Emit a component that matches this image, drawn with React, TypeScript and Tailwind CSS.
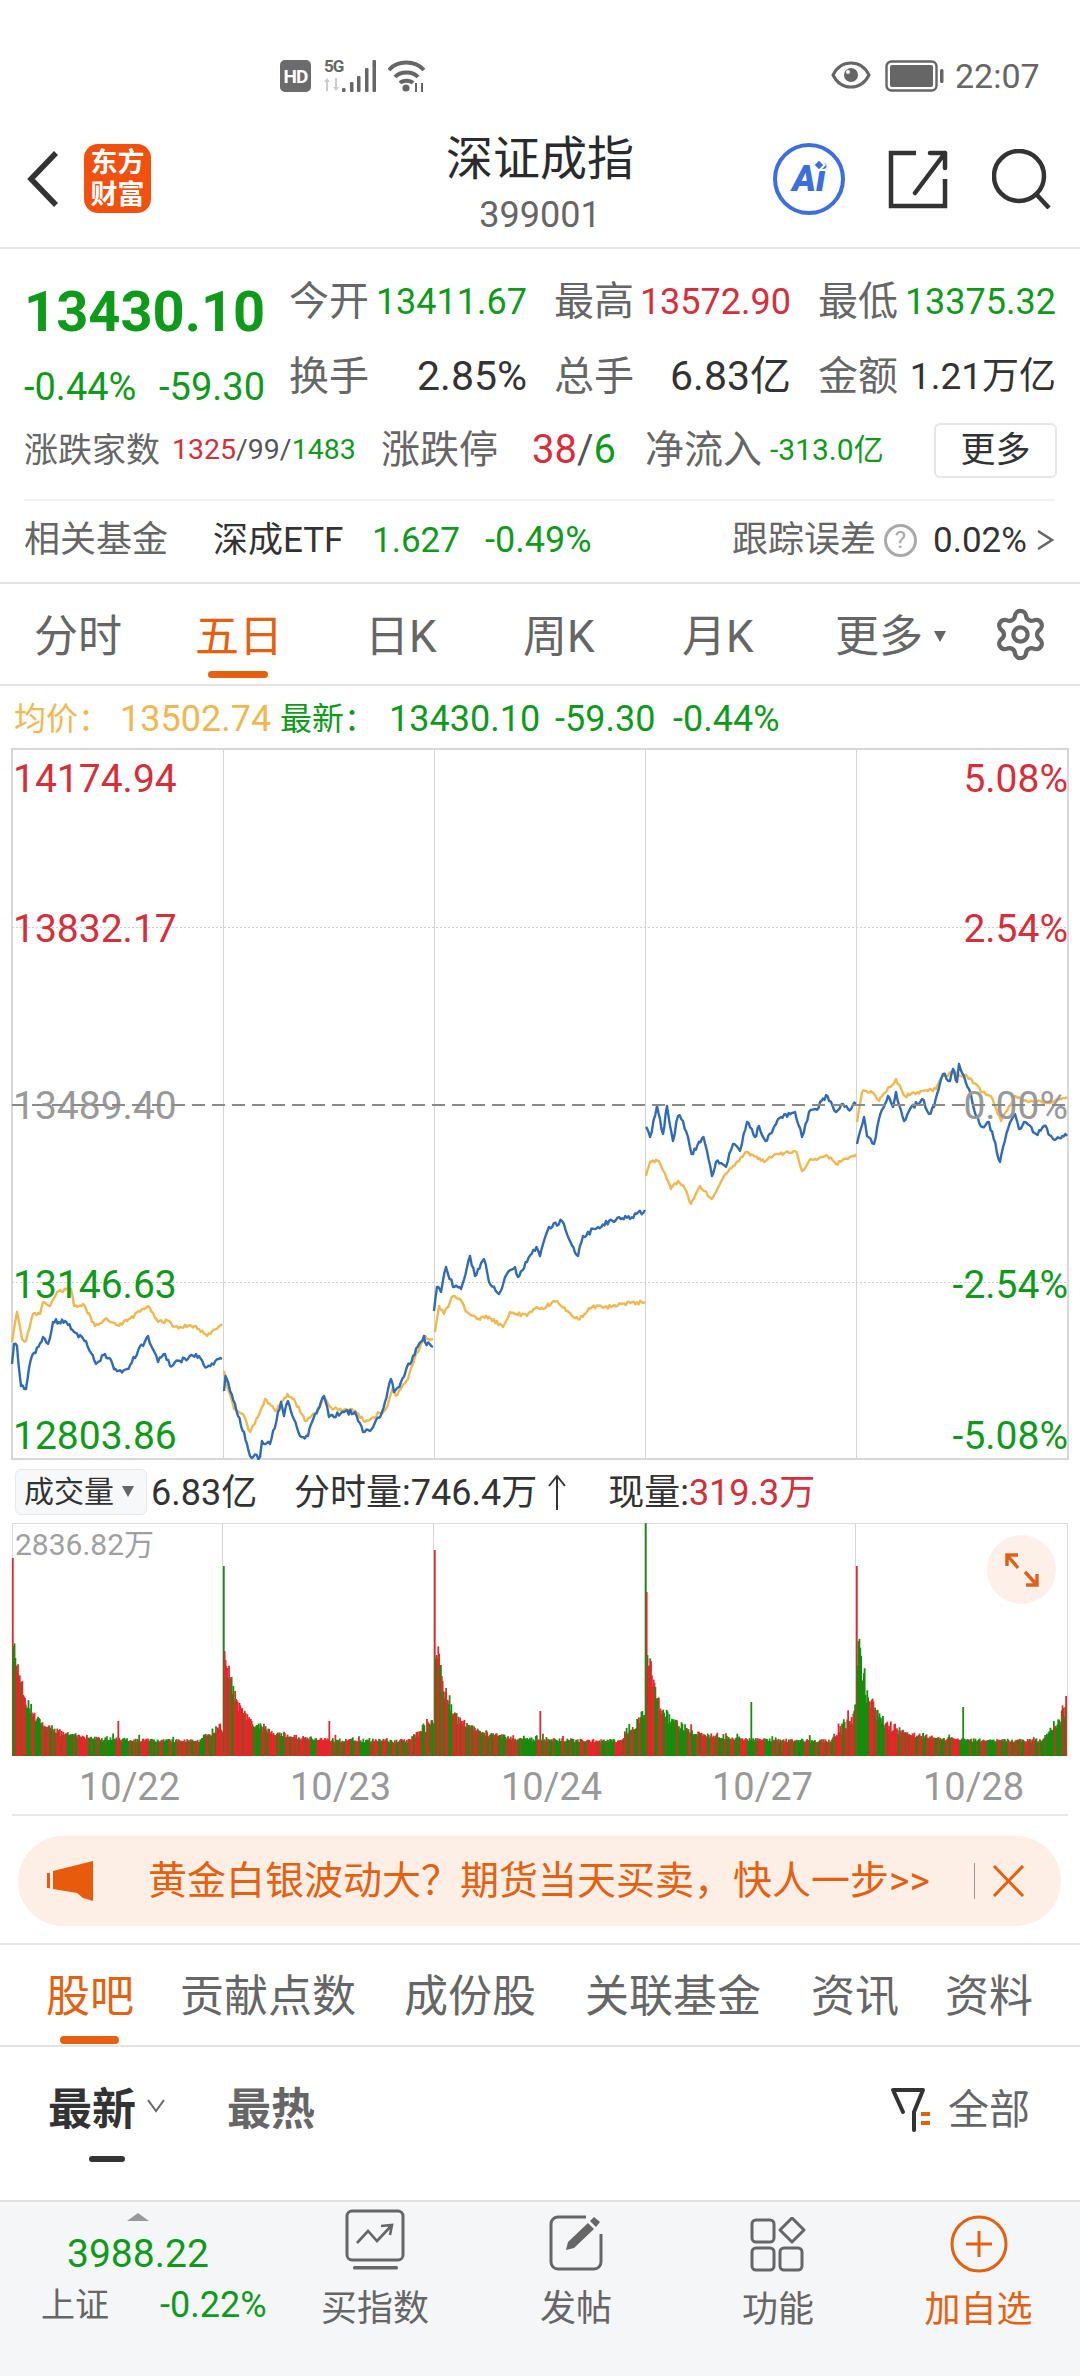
import React from "react";
import { Settings } from "lucide-react";

const GREEN = "text-[#0f9b1a]";
const RED = "text-[#d62f3a]";

// small seeded random so the chart noise stays the same on every load
function makeRand(seed: number) {
  let s = seed;
  return () => {
    s = (s * 1664525 + 1013904223) % 4294967296;
    return s / 4294967296;
  };
}

type Pt = [number, number];

function noisy(anchors: Pt[], seed: number, amp: number) {
  const rand = makeRand(seed);
  const out: string[] = [];
  anchors.forEach((p, i) => {
    if (i === 0) {
      out.push(`${p[0]},${p[1]}`);
      return;
    }
    const prev = anchors[i - 1];
    const steps = Math.max(1, Math.round((p[0] - prev[0]) / 1.6));
    for (let k = 1; k <= steps; k++) {
      const t = k / steps;
      const n = k === steps ? 0 : (rand() - 0.5) * amp * 2;
      out.push(`${(prev[0] + (p[0] - prev[0]) * t).toFixed(1)},${(prev[1] + (p[1] - prev[1]) * t + n).toFixed(1)}`);
    }
  });
  return out.join(" ");
}

const blue: Pt[][] = [
  [[12,1365],[14,1345],[17,1347],[21,1387],[26,1390],[31,1360],[43,1338],[48,1345],[53,1323],[65,1322],[74,1333],[86,1342],[96,1365],[105,1355],[117,1372],[127,1370],[148,1337],[158,1363],[165,1355],[170,1367],[196,1355],[207,1368],[222,1360]],
  [[224,1392],[225.5,1377],[238,1417],[244,1433],[250,1457],[260,1458],[262,1442],[270,1445],[281,1403],[284,1417],[288,1402],[300,1437],[308,1437],[312,1423],[324,1397],[329,1418],[344,1413],[355,1413],[363,1433],[370,1432],[382,1413],[391,1380],[394,1393],[401,1383],[413,1357],[424,1337],[425,1343],[433,1348]],
  [[434,1312],[437,1288],[441,1293],[446,1268],[453,1288],[461,1290],[470,1257],[475,1277],[484,1260],[489,1283],[499,1295],[508,1273],[515,1268],[518,1278],[527,1263],[536.5,1248],[540,1257],[549,1228],[562,1222],[569,1240],[578,1257],[583,1237],[598,1228],[619,1218],[630,1220],[645,1211]],
  [[646,1128],[650,1138],[657,1107],[663,1135],[667,1107],[673,1142],[678,1117],[683,1122],[688,1138],[691.5,1155],[703.5,1138],[712,1177],[716,1163],[726,1168],[733,1145],[740,1152],[747,1123],[755,1138],[759,1127],[765.5,1142],[776,1125],[781,1118],[795,1113],[802,1138],[809,1113],[815.5,1110],[827.5,1097],[836,1113],[843,1105],[848,1110],[856,1105]],
  [[857,1145],[864,1118],[867,1137],[874,1145],[879,1120],[888,1097],[893,1108],[896,1093],[904,1122],[910,1110],[922,1100],[929,1115],[934,1108],[943,1075],[950,1082],[953,1070],[957,1083],[959,1065],[969,1090],[976,1117],[982.5,1128],[989,1123],[1000,1163],[1008,1130],[1015,1115],[1019,1130],[1024,1123],[1036,1135],[1044,1127],[1053,1140],[1067,1137]],
];

const yellow: Pt[][] = [
  [[12,1343],[17,1313],[22,1340],[26,1342],[33,1315],[40,1315],[43,1303],[50,1307],[57,1293],[71,1290],[74,1307],[83,1305],[95,1327],[105,1320],[119,1327],[148,1307],[158,1323],[169,1322],[174,1328],[196,1327],[207,1337],[222,1325]],
  [[224,1372],[227,1387],[234,1410],[243,1415],[250,1433],[258,1418],[265,1400],[275.5,1412],[287.5,1395],[294,1400],[305,1422],[315,1415],[324,1398],[332,1410],[355,1412],[365,1423],[386,1410],[392.5,1390],[396,1397],[408,1380],[415,1358],[424,1338],[433,1340]],
  [[435,1333],[439,1307],[444,1315],[453,1297],[460,1300],[467,1313],[477,1320],[489,1318],[503,1328],[510,1313],[527,1317],[536.5,1308],[540,1310],[557,1302],[567.5,1312],[578,1320],[592,1308],[611,1308],[621,1305],[645,1303]],
  [[646,1177],[650,1163],[659,1162],[671,1190],[678,1182],[685,1190],[691,1205],[700,1187],[712,1200],[724,1177],[733,1167],[747,1153],[764,1163],[778,1155],[796.5,1153],[802,1172],[809,1162],[827.5,1157],[836,1165],[856,1155]],
  [[857,1123],[862,1093],[871,1092],[879,1102],[896,1080],[905,1097],[922,1092],[936,1090],[943,1077],[953,1074],[967,1077],[982.5,1093],[991,1097],[1001,1122],[1015,1097],[1029,1103],[1053,1103],[1067,1098]],
];

const dayStarts = [12, 223, 434, 645, 856];
const gridX = [223.5, 434.5, 645.5, 856.5];

// first bars of each session and the lone midday bar, read off the picture
const opens: { top: number; second: number; firstGreen: boolean; noonX: number; noonH: number; noonGreen: boolean }[] = [
  { top: 198, second: 110, firstGreen: false, noonX: 118, noonH: 35, noonGreen: false },
  { top: 190, second: 105, firstGreen: true, noonX: 329, noonH: 35, noonGreen: false },
  { top: 206, second: 97, firstGreen: false, noonX: 540, noonH: 45, noonGreen: false },
  { top: 233, second: 164, firstGreen: true, noonX: 751, noonH: 54, noonGreen: true },
  { top: 190, second: 90, firstGreen: false, noonX: 963, noonH: 49, noonGreen: true },
];

type Bar = { x: number; y: number; green: boolean };

function volumeBars() {
  const rand = makeRand(77);
  const bars: Bar[] = [];
  const base = 1757;
  let green = false;
  dayStarts.forEach((s, d) => {
    const o = opens[d];
    for (let i = 0; i < 241; i++) {
      const x = s + 0.8 + i * 0.872;
      let h = 13 + rand() * 4 + 66 * Math.exp(-i / 10) * (0.75 + rand() * 0.4) + 44 * Math.exp(-i / 35) * (0.65 + rand() * 0.55);
      if (rand() < 0.06) h += rand() * 7;
      if (i > 212) h += (i - 212) * (d === 4 ? 1.4 : 0.7 + d * 0.2) * (0.5 + rand() * 0.6);
      if (rand() < 0.3) green = !green;
      let isGreen = green;
      if (i === 0) {
        h = o.top;
        isGreen = o.firstGreen;
      }
      if (i === 1) {
        h = o.second;
        isGreen = !o.firstGreen;
      }
      if (Math.abs(x - o.noonX) < 0.5) {
        h = o.noonH;
        isGreen = o.noonGreen;
      }
      if (d === 4 && i === 240) {
        h = 60;
        isGreen = false;
      }
      bars.push({ x, y: base - h, green: isGreen });
    }
  });
  return bars;
}

const bars = volumeBars();

function PriceChart() {
  return (
    <div className="relative h-[712px] w-[1080px]">
      <svg width={1080} height={712} viewBox="0 749 1080 712" className="block">
        <rect x={12} y={750} width={1056} height={710} fill="none" stroke="#d8d8d8" strokeWidth={2} />
        {gridX.map((x) => (
          <line key={x} x1={x} x2={x} y1={750} y2={1460} stroke="#d4d4d4" strokeWidth={1} />
        ))}
        <line x1={12} x2={1068} y1={928.5} y2={928.5} stroke="#cfcfcf" strokeWidth={1} strokeDasharray="2 2" />
        <line x1={12} x2={1068} y1={1283.5} y2={1283.5} stroke="#cfcfcf" strokeWidth={1} strokeDasharray="2 2" />
        {yellow.map((p, i) => (
          <polyline key={i} points={noisy(p, 11 + i, 1.8)} fill="none" stroke="#f2b850" strokeWidth={2.4} strokeLinejoin="round" />
        ))}
        {blue.map((p, i) => (
          <polyline key={i} points={noisy(p, 41 + i, 2.6)} fill="none" stroke="#2f6cb5" strokeWidth={2.4} strokeLinejoin="round" />
        ))}
      </svg>
      <span className={`absolute left-[13px] top-[6px] text-[39px] leading-[50px] ${RED}`}>14174.94</span>
      <span className={`absolute left-[13px] top-[156px] text-[39px] leading-[50px] ${RED}`}>13832.17</span>
      <span className="absolute left-[13px] top-[333px] text-[39px] leading-[50px] text-[#999]">13489.40</span>
      <span className={`absolute left-[13px] top-[512px] text-[39px] leading-[50px] ${GREEN}`}>13146.63</span>
      <span className={`absolute left-[13px] top-[663px] text-[39px] leading-[50px] ${GREEN}`}>12803.86</span>
      <span className={`absolute right-[12px] top-[6px] text-[39px] leading-[50px] ${RED}`}>5.08%</span>
      <span className={`absolute right-[12px] top-[156px] text-[39px] leading-[50px] ${RED}`}>2.54%</span>
      <span className="absolute right-[12px] top-[333px] text-[39px] leading-[50px] text-[#999]">0.00%</span>
      <span className={`absolute right-[12px] top-[512px] text-[39px] leading-[50px] ${GREEN}`}>-2.54%</span>
      <span className={`absolute right-[12px] top-[663px] text-[39px] leading-[50px] ${GREEN}`}>-5.08%</span>
      <svg width={1080} height={12} viewBox="0 1100 1080 12" className="absolute left-0 top-[351px]">
        <line x1={12} x2={1068} y1={1106} y2={1106} stroke="#8a8a8a" strokeWidth={2} strokeDasharray="13 7" />
      </svg>
    </div>
  );
}

function VolumeChart() {
  return (
    <div className="relative h-[234px] w-[1080px]">
      <svg width={1080} height={234} viewBox="0 1524 1080 234" className="block">
        <line x1={12} x2={1068} y1={1524.5} y2={1524.5} stroke="#dcdcdc" strokeWidth={1} />
        <line x1={12.5} x2={12.5} y1={1524} y2={1757} stroke="#dcdcdc" strokeWidth={1} />
        <line x1={1067.5} x2={1067.5} y1={1524} y2={1757} stroke="#dcdcdc" strokeWidth={1} />
        {gridX.map((x) => (
          <line key={x} x1={x - 1} x2={x - 1} y1={1524} y2={1757} stroke="#d8d8d8" strokeWidth={1} />
        ))}
        {bars.map((b, i) => (
          <line key={i} x1={b.x} x2={b.x} y1={1757} y2={b.y} stroke={b.green ? "#178c0e" : "#e2282a"} strokeWidth={1.8} />
        ))}
      </svg>
      <span className="absolute left-[15px] top-[4px] text-[30px] leading-[36px] text-[#a0a0a0]">2836.82万</span>
      <div className="absolute left-[987px] top-[12px] flex h-[69px] w-[69px] items-center justify-center rounded-full bg-[#fdf0e8]">
        <svg width="36" height="36" viewBox="0 0 36 36" fill="none" stroke="#e0601a" strokeWidth="3.4">
          <path d="M3 14V3h11M3 3l11 13M33 22v11H22M33 33L21 20" />
        </svg>
      </div>
    </div>
  );
}

function QuoteCell({ label, value, color = "text-[#333]", size = "text-[36px]" }: { label: string; value: string; color?: string; size?: string }) {
  return (
    <div className="flex items-center justify-between">
      <span className="text-[40px] leading-none text-[#666]">{label}</span>
      <span className={`${size} leading-none ${color}`}>{value}</span>
    </div>
  );
}

export default function App() {
  return (
    <div className="flex h-[2376px] w-[1080px] flex-col overflow-hidden bg-white [font-family:Roboto,'Noto_Sans_CJK_SC',sans-serif]">
      {/* status bar */}
      <div className="flex h-[110px] items-start pl-[280px] pt-[60px] text-[#666]">
        <div className="flex h-[32px] w-[31px] items-center justify-center rounded-[5px] bg-[#6b6b6b] text-[19px] font-bold leading-none tracking-[-1px] text-white">HD</div>
        <div className="relative ml-[13px] h-[32px] w-[18px]">
          <span className="absolute left-0 top-[-2px] text-[17px] font-bold leading-[16px] tracking-[-1px]">5G</span>
          <svg width="16" height="13" viewBox="0 0 16 13" fill="#ccc" className="absolute left-0 top-[18px]">
            <path d="M3 0l3 4H4v9H2V4H0zM12 13l-3-4h2V0h2v9h2z" />
          </svg>
        </div>
        <svg width="34" height="32" viewBox="0 0 34 32" fill="#666">
          <rect x="0" y="28" width="3.5" height="4" rx="1" />
          <rect x="8" y="22" width="3.5" height="10" rx="1" />
          <rect x="15" y="16" width="3.5" height="16" rx="1" />
          <rect x="23" y="8" width="3.5" height="24" rx="1" />
          <rect x="30.5" y="0" width="3.5" height="32" rx="1" />
        </svg>
        <svg width="40" height="32" viewBox="0 0 40 32" fill="none" stroke="#666" strokeWidth="3.8" className="ml-[12px]">
          <path d="M1 10C9 0 27 0 36 10" />
          <path d="M7 17c5-6 18-6 23 0" />
          <path d="M12 23c3-3 10-3 13 0" />
          <circle cx="18" cy="28" r="3.6" fill="#666" stroke="none" />
          <path d="M28 32v-9M34 32v-9" strokeWidth="2" />
        </svg>
        <svg width="40" height="30" viewBox="0 0 40 30" fill="none" stroke="#666" strokeWidth="3" className="ml-[403px]">
          <path d="M2 15C10 -1 30 -1 38 15C30 31 10 31 2 15Z" />
          <circle cx="20" cy="15" r="7" fill="#666" stroke="none" />
          <circle cx="17" cy="12" r="2" fill="#fff" stroke="none" />
        </svg>
        <svg width="60" height="32" viewBox="0 0 60 32" fill="none" className="ml-[14px]">
          <rect x="1.5" y="1.5" width="50" height="29" rx="5" stroke="#666" strokeWidth="2.4" />
          <rect x="5" y="5" width="43" height="22" rx="2" fill="#666" />
          <rect x="55" y="9" width="3.5" height="14" rx="1.5" fill="#666" />
        </svg>
        <span className="ml-[10px] text-[34px] leading-[32px]">22:07</span>
      </div>

      {/* title bar */}
      <div className="grid h-[139px] grid-cols-[1fr_auto_1fr] items-center border-b-2 border-[#e4e4e4]">
        <div className="flex items-center pl-[27px]">
          <svg width="32" height="56" viewBox="0 0 32 56" fill="none" stroke="#333" strokeWidth="5.5">
            <path d="M29 2L4 28l25 26" />
          </svg>
          <div className="ml-[25px] flex h-[69px] w-[67px] flex-col items-center justify-center rounded-[14px] bg-[#f2500e] text-[27px] font-bold leading-[32px] text-white">
            <span>东方</span>
            <span>财富</span>
          </div>
        </div>
        <div className="flex flex-col items-center pt-[7px]">
          <span className="text-[47px] leading-[56px] text-[#2b2b2b]">深证成指</span>
          <span className="mt-[9px] text-[36px] leading-[38px] text-[#666]">399001</span>
        </div>
        <div className="flex items-center justify-end pr-[28px]">
          <div className="relative flex h-[72px] w-[72px] items-center justify-center rounded-full border-[4px] border-[#3b6fe0] text-[36px] font-black italic leading-none text-[#3b6fe0]">
            Ai
            <span className="absolute left-[37px] top-[13px] h-[10px] w-[10px] rotate-45 rounded-[1px] border-2 border-white bg-[#3b6fe0]" />
          </div>
          <svg width="60" height="60" viewBox="0 0 60 60" fill="none" stroke="#333" strokeWidth="4.5" className="ml-[43px]">
            <path d="M28 4H3v53h54V30" />
            <path d="M57 4H42M57 4v15M57 4L27 44" strokeLinecap="round" />
          </svg>
          <svg width="60" height="60" viewBox="0 0 60 60" fill="none" stroke="#333" strokeWidth="4.5" className="ml-[44px]">
            <circle cx="27" cy="27" r="25" />
            <path d="M45 46l12 13" />
          </svg>
        </div>
      </div>

      {/* quote block */}
      <div className="flex pt-[13px]">
        <div className="flex w-[289px] flex-col pl-6">
          <div className={`flex h-[100px] items-center text-[56px] font-bold leading-none ${GREEN}`}>13430.10</div>
          <div className={`flex h-[50px] w-[241px] items-center justify-between text-[38px] leading-none ${GREEN}`}>
            <span>-0.44%</span>
            <span>-59.30</span>
          </div>
        </div>
        <div className="grid w-[767px] grid-cols-[238px_237px_238px] auto-rows-[75px] items-center gap-x-[27px] pt-[2px]">
          <QuoteCell label="今开" value="13411.67" color={GREEN} />
          <QuoteCell label="最高" value="13572.90" color={RED} />
          <QuoteCell label="最低" value="13375.32" color={GREEN} />
          <QuoteCell label="换手" value="2.85%" size="text-[41px]" />
          <QuoteCell label="总手" value="6.83亿" size="text-[41px]" />
          <QuoteCell label="金额" value="1.21万亿" size="text-[37px]" />
        </div>
      </div>
      <div className="flex h-[72px] items-center pl-6">
        <span className="w-[148px] text-[34px] leading-none text-[#666]">涨跌家数</span>
        <span className="w-[209px] text-[28.5px] leading-none text-[#555]">
          <span className={RED}>1325</span>/99/<span className={GREEN}>1483</span>
        </span>
        <span className="w-[151px] text-[39px] leading-none text-[#666]">涨跌停</span>
        <span className="w-[113px] text-[40px] leading-none text-[#555]">
          <span className={RED}>38</span>/<span className={GREEN}>6</span>
        </span>
        <span className="w-[125px] text-[39px] leading-none text-[#666]">净流入</span>
        <span className={`w-[164px] text-[30px] leading-none ${GREEN}`}>-313.0亿</span>
        <span className="flex h-[55px] w-[123px] items-center justify-center rounded-[6px] border-2 border-[#e6e6e6] text-[35px] leading-none text-[#333]">更多</span>
      </div>
      <div className="mx-6 mt-[13px] h-[2px] w-[1031px] bg-[#f3f3f3]" />
      <div className="flex h-[81px] items-center pb-[3px] pl-6">
        <span className="w-[189px] text-[36px] leading-none text-[#666]">相关基金</span>
        <span className="w-[159px] text-[35px] leading-none text-[#333]">深成ETF</span>
        <span className={`w-[113px] text-[35px] leading-none ${GREEN}`}>1.627</span>
        <span className={`w-[247px] text-[36px] leading-none ${GREEN}`}>-0.49%</span>
        <span className="w-[152px] whitespace-nowrap text-[36px] leading-none text-[#666]">跟踪误差</span>
        <span className="flex h-[33px] w-[33px] items-center justify-center rounded-full border-[3px] border-[#aaa] text-[24px] leading-none text-[#aaa]">?</span>
        <span className="ml-[16px] text-[35px] leading-none text-[#333]">0.02%</span>
        <svg width="18" height="24" viewBox="0 0 18 24" fill="none" stroke="#666" strokeWidth="2.6" className="ml-[9px]">
          <path d="M2 3l14 9L2 21" />
        </svg>
      </div>

      {/* period tabs */}
      <div className="flex h-[104px] items-center border-y-2 border-[#e4e4e4] pl-[34px] pt-[5px] text-[44px] leading-none text-[#666]">
        <span className="w-[161px]">分时</span>
        <span className="relative w-[170px] text-[#e5600f]">
          五日
          <span className="absolute left-[13px] top-[56px] h-[7px] w-[60px] rounded-full bg-[#e5600f]" />
        </span>
        <span className="w-[158px]">日K</span>
        <span className="w-[159px]">周K</span>
        <span className="w-[153px]">月K</span>
        <span className="flex w-[157px] items-center">
          更多
          <span className="ml-[11px] h-0 w-0 border-x-[6px] border-t-[11px] border-x-transparent border-t-[#666]" />
        </span>
        <Settings size={57} strokeWidth={1.8} color="#666" className="mb-[5px]" />
      </div>

      {/* average / latest */}
      <div className="flex h-[62px] items-center pl-[14px] pt-[4px] text-[36px] leading-none">
        <span className="w-[106px] text-[32px] text-[#f2b850]">均价：</span>
        <span className="w-[160px] text-[#f2b850]">13502.74</span>
        <span className={`w-[109px] text-[32px] ${GREEN}`}>最新：</span>
        <span className={`w-[166px] ${GREEN}`}>13430.10</span>
        <span className={`w-[118px] ${GREEN}`}>-59.30</span>
        <span className={GREEN}>-0.44%</span>
      </div>

      <PriceChart />

      {/* volume header */}
      <div className="flex h-[63px] items-center pl-[15px] text-[36px] leading-none text-[#333]">
        <div className="flex h-[46px] w-[132px] items-center rounded-[6px] border border-[#e6e8ea] bg-[#f7f8fa] pl-[8px] text-[30px]">
          成交量
          <span className="ml-[8px] h-0 w-0 border-x-[6px] border-t-[11px] border-x-transparent border-t-[#666]" />
        </div>
        <span className="ml-[4px] w-[143px] pt-[3px]">6.83亿</span>
        <span className="pt-[3px]">分时量:746.4万</span>
        <svg width="20" height="36" viewBox="0 0 20 36" fill="none" stroke="#333" strokeWidth="2" className="ml-[10px]">
          <path d="M10 36V2M2 12l8-10 8 10" />
        </svg>
        <span className="ml-[41px] pt-[3px]">现量:</span>
        <span className={`pt-[3px] ${RED}`}>319.3万</span>
      </div>

      <VolumeChart />

      {/* dates */}
      <div className="mx-3 flex h-[59px] w-[1056px] items-center border-b-2 border-[#e8e8e8] pl-3 pt-[3px] text-[38px] leading-none text-[#999]">
        {["10/22", "10/23", "10/24", "10/27", "10/28"].map((d) => (
          <span key={d} className="w-[211px] shrink-0 text-center">
            {d}
          </span>
        ))}
      </div>

      {/* promo banner */}
      <div className="mx-[18px] mt-[20px] flex h-[90px] w-[1043px] shrink-0 items-center rounded-full bg-[#fdeee6] pl-[29px]">
        <svg width="46" height="40" viewBox="0 0 46 40" fill="#e85a0c">
          <rect x="0" y="12" width="3" height="15" />
          <path d="M6 10L46 0v40l-10-3-6-5-24-4z" />
        </svg>
        <span className="ml-[55px] w-[826px] whitespace-nowrap text-[39px] leading-none text-[#e5600f]">黄金白银波动大？期货当天买卖，快人一步&gt;&gt;</span>
        <span className="h-[36px] w-[1px] bg-[#999]" />
        <svg width="33" height="32" viewBox="0 0 33 32" fill="none" stroke="#e5600f" strokeWidth="3" className="ml-[17px]">
          <path d="M2 1l29 30M31 1L2 31" />
        </svg>
      </div>
      <div className="mt-[17px] h-[2px] w-full bg-[#e4e4e4]" />

      {/* content tabs */}
      <div className="flex h-[102px] items-center border-b-2 border-[#e4e4e4] pl-[46px] pt-[3px] text-[44px] leading-none text-[#666]">
        <span className="relative w-[134px] text-[#e5600f]">
          股吧
          <span className="absolute left-[14px] top-[61px] h-[8px] w-[59px] rounded-full bg-[#e5600f]" />
        </span>
        <span className="w-[224px]">贡献点数</span>
        <span className="w-[181px]">成份股</span>
        <span className="w-[226px]">关联基金</span>
        <span className="w-[134px]">资讯</span>
        <span>资料</span>
      </div>

      {/* sort row */}
      <div className="flex h-[153px] shrink-0 items-start pl-[48px] pt-[41px]">
        <span className="relative text-[44px] font-bold leading-[44px] text-[#333]">
          最新
          <span className="absolute left-[41px] top-[68px] h-[6px] w-[36px] rounded-full bg-[#333]" />
        </span>
        <svg width="20" height="16" viewBox="0 0 20 16" fill="none" stroke="#666" strokeWidth="2" className="ml-[10px] mt-[10px]">
          <path d="M2 2l8 11 8-11" />
        </svg>
        <span className="ml-[61px] text-[44px] font-bold leading-[44px] text-[#666]">最热</span>
        <svg width="44" height="46" viewBox="0 0 44 46" fill="none" className="ml-[575px] mt-[-2px]">
          <path d="M3 4h30l-9 22v18M3 4l10 22" stroke="#333" strokeWidth="4" strokeLinecap="round" strokeLinejoin="round" />
          <rect x="31" y="26" width="9" height="4" fill="#e5600f" />
          <rect x="31" y="35" width="9" height="4" fill="#e5600f" />
        </svg>
        <span className="ml-[14px] text-[41px] leading-[44px] text-[#666]">全部</span>
      </div>

      {/* bottom bar */}
      <div className="flex flex-1 border-t-2 border-[#e0e0e0] bg-[#f5f6f8] pt-[7px]">
        <div className="flex w-[283px] flex-col pl-[41px]">
          <span className="ml-[86px] mt-[4px] h-0 w-0 border-x-[11px] border-b-[8px] border-x-transparent border-b-[#999]" />
          <span className={`ml-[26px] mt-[9px] text-[39px] leading-[48px] ${GREEN}`}>3988.22</span>
          <div className="mt-[5px] flex items-center">
            <span className="w-[119px] text-[34px] leading-[44px] text-[#666]">上证</span>
            <span className={`text-[36px] leading-[44px] ${GREEN}`}>-0.22%</span>
          </div>
        </div>
        <div className="flex w-[184px] flex-col items-center">
          <svg width="60" height="62" viewBox="0 0 60 62" fill="none" stroke="#666" strokeWidth="3">
            <rect x="2" y="2" width="56" height="49" rx="5" />
            <path d="M12 34l11-12 9 10 15-16M36 17l11-1-2 10" strokeWidth="2.6" />
            <rect x="8" y="57" width="45" height="3.5" rx="1.5" fill="#666" stroke="none" />
          </svg>
          <span className="mt-[16px] text-[36px] leading-[44px] text-[#666]">买指数</span>
        </div>
        <div className="flex w-[218px] flex-col items-center">
          <svg width="56" height="58" viewBox="0 0 56 58" fill="none" stroke="#666" strokeWidth="3" className="mt-[5px]">
            <path d="M38 3H10a7 7 0 0 0-7 7v38a7 7 0 0 0 7 7h36a7 7 0 0 0 7-7V20" />
            <path d="M18 36l2-8 20-19 6 6-20 19zM42 7l4-4 6 5-4 5z" fill="#666" stroke="none" />
          </svg>
          <span className="mt-[15px] text-[36px] leading-[44px] text-[#666]">发帖</span>
        </div>
        <div className="flex w-[186px] flex-col items-center">
          <svg width="56" height="56" viewBox="0 0 56 56" fill="none" stroke="#666" strokeWidth="3" className="mt-[8px]">
            <rect x="2" y="3" width="22" height="22" rx="4" />
            <path d="M42 1l12 12-12 12-12-12z" strokeLinejoin="round" />
            <rect x="2" y="31" width="22" height="22" rx="4" />
            <rect x="30" y="31" width="22" height="22" rx="4" />
          </svg>
          <span className="mt-[15px] text-[36px] leading-[44px] text-[#666]">功能</span>
        </div>
        <div className="flex w-[209px] flex-col items-center pl-[6px]">
          <svg width="58" height="58" viewBox="0 0 58 58" fill="none" stroke="#e5600f" strokeWidth="3" className="mt-[6px]">
            <circle cx="29" cy="29" r="27" />
            <path d="M29 16v26M16 29h26" />
          </svg>
          <span className="mt-[15px] text-[36px] leading-[44px] text-[#e5600f]">加自选</span>
        </div>
      </div>
    </div>
  );
}
